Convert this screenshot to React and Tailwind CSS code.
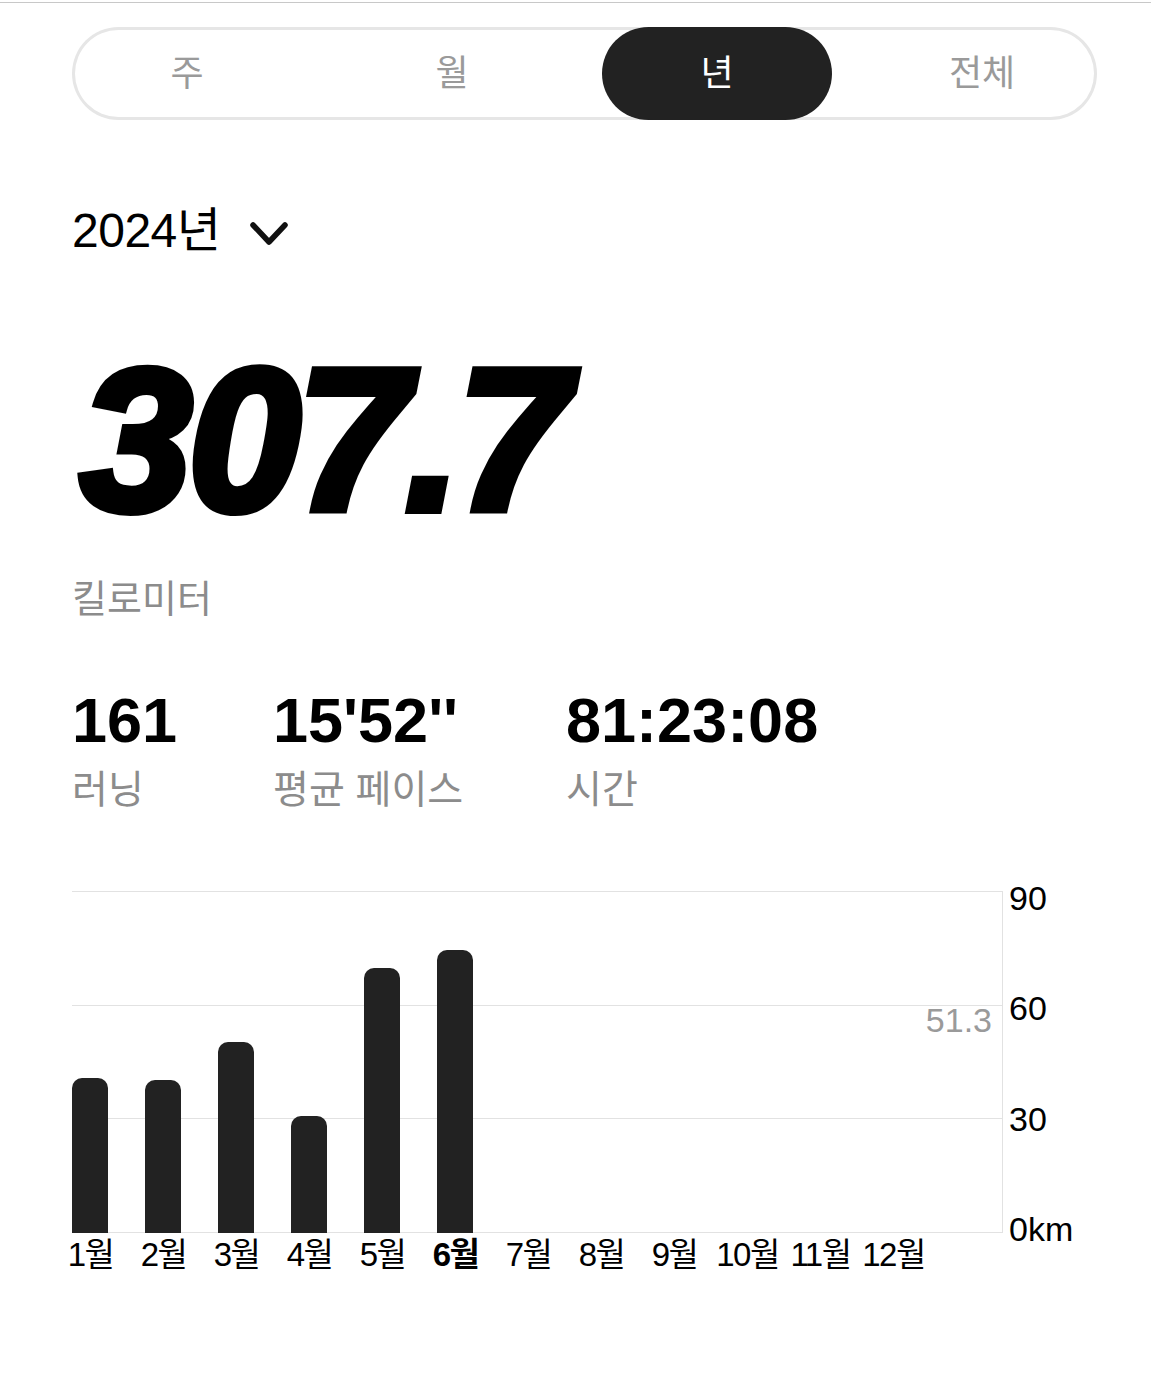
import React from 'react';

const FONT = { fontFamily: '"Liberation Sans", "Noto Sans CJK KR", sans-serif' };

const tabs = ['주', '월', '년', '전체'];
const bars = [155, 153, 191, 117, 265, 283, 0, 0, 0, 0, 0, 0];
const months = ['1월', '2월', '3월', '4월', '5월', '6월', '7월', '8월', '9월', '10월', '11월', '12월'];

const ChartAxis = () => (
  <div className="relative w-[100px] h-[342px]">
    <span className="absolute left-[6px] top-[-10px] text-[34px] leading-none text-black">90</span>
    <span className="absolute left-[6px] top-[100px] text-[34px] leading-none text-black">60</span>
    <span className="absolute left-[6px] top-[211px] text-[34px] leading-none text-black">30</span>
    <span className="absolute left-[6px] top-[321px] text-[34px] leading-none text-black">0km</span>
  </div>
);

export default function App() {
  return (
    <div className="bg-white min-h-[1383px] w-[1151px] pt-[2px]" style={FONT}>
      <div className="h-px bg-[#c8c8c8]" />

      {/* period tabs */}
      <div className="ml-[72px] w-[1025px] mt-[24px] h-[93px] rounded-full shadow-[inset_0_0_0_3px_#e6e6e6] flex justify-between">
        {tabs.map(t => (
          <div
            key={t}
            className={`w-[230px] h-full rounded-full flex items-center justify-center text-[36px] leading-none ${
              t === '년' ? 'bg-[#222222] text-white' : 'text-[#9a9a9a]'
            }`}
          >
            {t}
          </div>
        ))}
      </div>

      {/* year picker */}
      <div className="ml-[72px] mt-[87px] flex items-center gap-[30px]">
        <span className="text-[48px] leading-none text-black tracking-[-0.5px]">2024년</span>
        <svg width="38" height="24" viewBox="0 0 38 24" className="mt-[6px]">
          <polyline points="3,3 19,20 35,3" fill="none" stroke="#111" strokeWidth="5.5" strokeLinecap="round" strokeLinejoin="round" />
        </svg>
      </div>

      {/* total distance */}
      <div className="ml-[80px] mt-[84px]">
        <div className="text-[202px] leading-none font-bold italic text-black tracking-[-4px] [-webkit-text-stroke:8px_black]">
          307.7
        </div>
      </div>
      <div className="ml-[72px] mt-[39px] text-[38px] leading-none text-[#8c8c8c]">킬로미터</div>

      {/* stats */}
      <div className="ml-[72px] mt-[71px] flex">
        <div className="w-[201px]">
          <div className="text-[63px] leading-none font-bold text-black">161</div>
          <div className="mt-[18px] text-[39px] leading-none text-[#8c8c8c]">러닝</div>
        </div>
        <div className="w-[293px]">
          <div className="text-[63px] leading-none font-bold text-black">15'52''</div>
          <div className="mt-[18px] text-[39px] leading-none text-[#8c8c8c]">평균 페이스</div>
        </div>
        <div>
          <div className="text-[63px] leading-none font-bold text-black">81:23:08</div>
          <div className="mt-[18px] text-[39px] leading-none text-[#8c8c8c]">시간</div>
        </div>
      </div>

      {/* monthly chart */}
      <div className="ml-[72px] mt-[82px] flex">
        <div className="relative w-[931px] h-[342px] border-r border-[#e2e2e2]">
          <div className="absolute inset-0 flex flex-col justify-between">
            <div className="h-px bg-[#e2e2e2]" />
            <div className="h-px bg-[#e2e2e2]" />
            <div className="h-px bg-[#e2e2e2]" />
            <div className="h-px bg-[#e2e2e2]" />
          </div>
          <span className="absolute right-[10px] top-[112px] text-[34px] leading-none text-[#9a9a9a]">51.3</span>
          <div className="relative h-full flex items-end gap-[37px]">
            {bars.map((h, i) => (
              <div
                key={i}
                className="w-[36px] bg-[#222222] rounded-t-[10px]"
                style={{ height: h }}
              />
            ))}
          </div>
        </div>
        <ChartAxis />
      </div>
      <div className="ml-[54px] mt-[5px] flex">
        {months.map((m, i) => (
          <div
            key={m}
            className={`w-[73px] text-center text-[33px] leading-none whitespace-nowrap tracking-[-1.5px] text-black ${
              i === 5 ? 'font-bold' : ''
            }`}
          >
            {m}
          </div>
        ))}
      </div>
    </div>
  );
}
